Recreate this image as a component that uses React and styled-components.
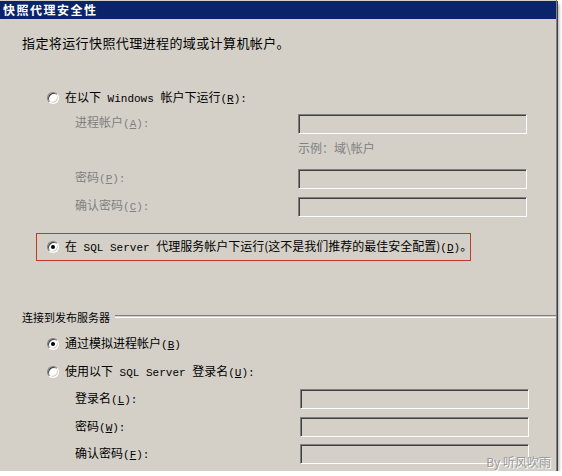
import React from 'react';
import styled, { createGlobalStyle } from 'styled-components';

const COLOR = {
  face: '#d4d0c8',
  title: '#0a246a',
  shadow: '#808080',
  darkShadow: '#404040',
  light: '#ffffff',
  disabled: '#808080',
  alert: '#c0392b',
};

const GlobalStyle = createGlobalStyle`
  html, body {
    margin: 0;
    padding: 0;
    background: #ffffff;
  }
  body {
    font-family: "Noto Sans CJK SC", "Noto Sans", sans-serif;
    font-size: 12px;
    color: #000;
  }
`;

const Window = styled.div`
  position: relative;
  width: 556px;
  height: 471px;
  background: ${COLOR.face};
  box-shadow: 1px 0 0 ${COLOR.shadow}, 2px 1px 0 ${COLOR.darkShadow},
    0 1px 0 ${COLOR.shadow}, 1px 2px 0 ${COLOR.darkShadow},
    3px 4px 3px rgba(0, 0, 0, 0.35);
  display: flex;
  flex-direction: column;
  overflow: hidden;
`;

const TitleBar = styled.div`
  margin-top: 1px;
  height: 18px;
  background: ${COLOR.title};
  color: #fff;
  font-weight: bold;
  font-size: 12px;
  line-height: 18px;
  padding-left: 3px;
  letter-spacing: 1.5px;
`;

const Body = styled.div`
  display: flex;
  flex-direction: column;
  padding-left: 22px;
`;

const Description = styled.div`
  margin-top: 17px;
  font-size: 13px;
  line-height: 14px;
  letter-spacing: 0.4px;
`;

const Latin = styled.span`
  font-family: "Liberation Mono", monospace;
  font-size: 11px;
  white-space: pre;
`;

const Key = styled.span`
  font-family: "Liberation Mono", monospace;
  font-size: 11px;
  u {
    text-underline-offset: 1px;
  }
`;

const RadioRow = styled.label`
  display: flex;
  align-items: center;
  gap: 6px;
  height: 14px;
  line-height: 14px;
  margin-top: ${(p) => p.$top || 0}px;
  margin-left: ${(p) => p.$indent ?? 25}px;
  white-space: nowrap;
`;

const RadioDot = styled.span`
  position: relative;
  box-sizing: border-box;
  width: 12px;
  height: 12px;
  border-radius: 50%;
  background: #fff;
  border: 1px solid;
  border-color: ${COLOR.shadow} ${COLOR.light} ${COLOR.light} ${COLOR.shadow};
  box-shadow: inset 1px 1px 0 ${COLOR.darkShadow}, inset -1px -1px 0 ${COLOR.face};
  flex-shrink: 0;

  &::after {
    content: '';
    display: ${(p) => (p.$checked ? 'block' : 'none')};
    position: absolute;
    left: 3px;
    top: 3px;
    width: 4px;
    height: 4px;
    border-radius: 50%;
    background: #000;
  }
`;

const FieldRow = styled.div`
  display: grid;
  grid-template-columns: ${(p) => p.$labelWidth}px 229px;
  align-items: center;
  padding-left: 53px;
  margin-top: ${(p) => p.$top}px;
  height: 20px;
`;

const FieldLabel = styled.span`
  color: ${(p) => (p.$disabled ? COLOR.disabled : '#000')};
  line-height: 14px;
  margin-top: ${(p) => (p.$disabled ? -3 : 0)}px;
`;

const TextBox = styled.div`
  box-sizing: border-box;
  height: 20px;
  background: ${COLOR.face};
  border: 1px solid;
  border-color: ${COLOR.shadow} ${COLOR.light} ${COLOR.light} ${COLOR.shadow};
  box-shadow: inset 1px 1px 0 ${COLOR.darkShadow};
`;

const Hint = styled.div`
  margin-top: 7px;
  margin-left: 276px;
  color: ${COLOR.disabled};
  line-height: 14px;
`;

const AlertBox = styled.div`
  box-sizing: border-box;
  margin-top: 16px;
  margin-left: 14px;
  width: 435px;
  height: 28px;
  border: 1px solid ${COLOR.alert};
  display: flex;
  align-items: center;
  padding-left: 10px;
`;

const GroupHeader = styled.div`
  display: flex;
  align-items: center;
  gap: 5px;
  margin-top: 49px;
  font-size: 11px;
  line-height: 14px;

  &::after {
    content: '';
    flex: 1;
    height: 1px;
    border-top: 1px solid ${COLOR.shadow};
    border-bottom: 1px solid ${COLOR.light};
    margin-top: -1px;
  }
`;

const Watermark = styled.div`
  position: absolute;
  right: 5px;
  bottom: 1px;
  color: #9a9a9a;
  font-size: 12px;
  text-shadow: 1px 1px 0 #fff;
`;

const Mnemonic = ({ k }) => (
  <Key>
    (<u>{k}</u>)
  </Key>
);

const Radio = ({ checked, children, top, indent }) => (
  <RadioRow $top={top} $indent={indent}>
    <RadioDot $checked={checked} />
    <span>{children}</span>
  </RadioRow>
);

const Field = ({ label, k, disabled, top, labelWidth }) => (
  <FieldRow $top={top} $labelWidth={labelWidth}>
    <FieldLabel $disabled={disabled}>
      {label}
      <Mnemonic k={k} />
      <Key>:</Key>
    </FieldLabel>
    <TextBox />
  </FieldRow>
);

export default function App() {
  return (
    <>
      <GlobalStyle />
      <Window>
        <TitleBar>快照代理安全性</TitleBar>
        <Body>
          <Description>指定将运行快照代理进程的域或计算机帐户。</Description>

          <Radio top={41}>
            在以下<Latin> Windows </Latin>帐户下运行<Mnemonic k="R" />
            <Key>:</Key>
          </Radio>
          <Field label="进程帐户" k="A" disabled top={9} labelWidth={223} />
          <Hint>示例：域\帐户</Hint>
          <Field label="密码" k="P" disabled top={14} labelWidth={223} />
          <Field label="确认密码" k="C" disabled top={8} labelWidth={223} />

          <AlertBox>
            <Radio checked indent={0}>
              在<Latin> SQL Server </Latin>代理服务帐户下运行(这不是我们推荐的最佳安全配置)
              <Mnemonic k="D" />。
            </Radio>
          </AlertBox>

          <GroupHeader>连接到发布服务器</GroupHeader>
          <Radio checked top={13}>
            通过模拟进程帐户<Mnemonic k="B" />
          </Radio>
          <Radio top={14}>
            使用以下<Latin> SQL Server </Latin>登录名<Mnemonic k="U" />
            <Key>:</Key>
          </Radio>
          <Field label="登录名" k="L" top={10} labelWidth={225} />
          <Field label="密码" k="W" top={8} labelWidth={225} />
          <Field label="确认密码" k="F" top={7} labelWidth={225} />
        </Body>
        <Watermark>By 听风吹雨</Watermark>
      </Window>
    </>
  );
}
